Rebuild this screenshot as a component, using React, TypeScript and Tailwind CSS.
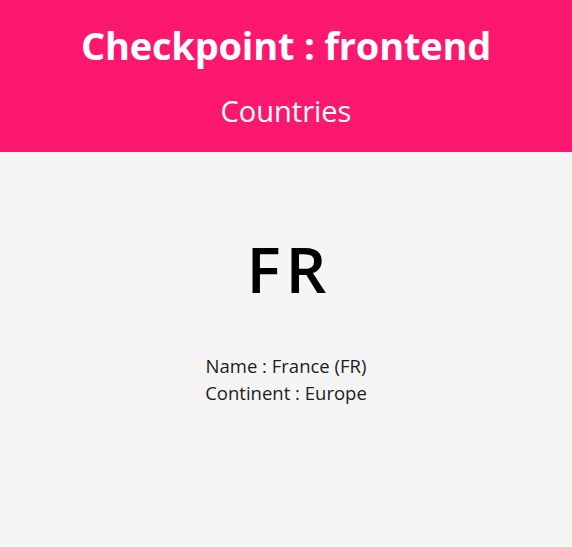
import React from 'react';

const country = { code: 'FR', name: 'France', continent: 'Europe' };

const App: React.FC = () => {
  return (
    <div className="min-h-screen bg-[#f5f5f5] text-[#1a1a1a]" style={{ fontFamily: '"Open Sans", "Noto Sans", sans-serif' }}>
      <header className="h-[152px] bg-[#fc176f] text-white flex flex-col items-center pt-[19px]">
        <h1 className="text-[38px] font-bold leading-[52px] tracking-[-0.2px]">Checkpoint : frontend</h1>
        <h2 className="text-[29px] leading-[40px] mt-[20px]">Countries</h2>
      </header>

      <main className="flex flex-col items-center">
        <div className="text-[64px] font-semibold leading-[90px] mt-[72px] tracking-[5px] pl-[6px] text-black">{country.code}</div>
        <div className="mt-[38px] text-[18.5px] leading-[27px] text-center text-[#1c1c1c]">
          <p>Name : {country.name} ({country.code})</p>
          <p>Continent : {country.continent}</p>
        </div>
      </main>
    </div>
  );
};

export default App;
